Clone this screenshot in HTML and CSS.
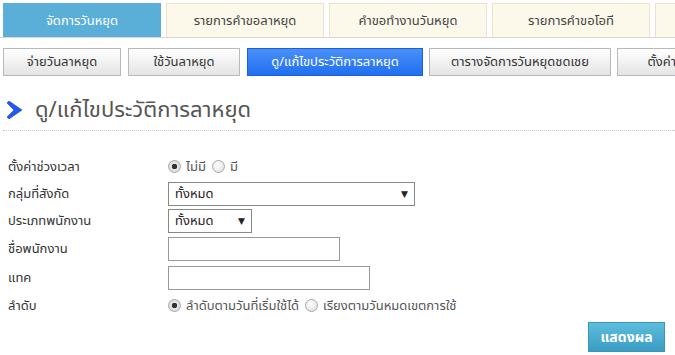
FILE: index.html
```html
<!DOCTYPE html>
<html lang="th">
<head>
    <meta charset="UTF-8">
    <meta name="viewport" content="width=device-width, initial-scale=1.0">
    <title>ดู/แก้ไขประวัติการลาหยุด</title>
    <link rel="stylesheet" href="styles.css">
</head>
<body>
    <div class="tabs">
        <div class="tab active">จัดการวันหยุด</div>
        <div class="tab">รายการคำขอลาหยุด</div>
        <div class="tab">คำขอทำงานวันหยุด</div>
        <div class="tab">รายการคำขอโอที</div>
        <div class="tab"></div>
    </div>

    <div class="subnav">
        <button class="btn">จ่ายวันลาหยุด</button>
        <button class="btn">ใช้วันลาหยุด</button>
        <button class="btn current">ดู/แก้ไขประวัติการลาหยุด</button>
        <button class="btn">ตารางจัดการวันหยุดชดเชย</button>
        <button class="btn">ตั้งค่าบริษัท</button>
    </div>

    <h2 class="page-title">
        <svg width="15" height="18" viewBox="0 0 15 18">
            <polygon points="0,2 2,0 15,9 2,18 0,16 7,9" fill="#2357ef" stroke="#1a3fd0" stroke-width="0.6"/>
        </svg>
        ดู/แก้ไขประวัติการลาหยุด
    </h2>

    <div class="form">
        <div class="row">
            <label>ตั้งค่าช่วงเวลา</label>
            <div class="field">
                <label class="radio"><input type="radio" name="period" checked> ไม่มี</label>
                <label class="radio"><input type="radio" name="period"> มี</label>
            </div>
        </div>
        <div class="row">
            <label>กลุ่มที่สังกัด</label>
            <div class="field">
                <div class="select wide">ทั้งหมด<span class="arrow">▼</span></div>
            </div>
        </div>
        <div class="row">
            <label>ประเภทพนักงาน</label>
            <div class="field">
                <div class="select narrow">ทั้งหมด<span class="arrow">▼</span></div>
            </div>
        </div>
        <div class="row tall">
            <label>ชื่อพนักงาน</label>
            <div class="field"><input type="text" class="text name"></div>
        </div>
        <div class="row tall">
            <label>แทค</label>
            <div class="field"><input type="text" class="text tag"></div>
        </div>
        <div class="row">
            <label>ลำดับ</label>
            <div class="field">
                <label class="radio"><input type="radio" name="order" checked> ลำดับตามวันที่เริ่มใช้ได้</label>
                <label class="radio"><input type="radio" name="order"> เรียงตามวันหมดเขตการใช้</label>
            </div>
        </div>
        <div class="actions">
            <button class="show">แสดงผล</button>
        </div>
    </div>
</body>
</html>
```

FILE: styles.css
```css
body {
    margin: 0;
    font-family: Tahoma, "Noto Sans Thai", "DejaVu Sans", "Noto Sans", sans-serif;
    font-size: 13px;
    color: #333;
    overflow: hidden;
    width: 675px;
    height: 355px;
}
.tabs {
    display: flex;
    gap: 5px;
    padding: 3px 0 0 3px;
    border-bottom: 1px solid #d6d6d6;
    height: 34px;
}
.tab {
    flex: 0 0 158px;
    box-sizing: border-box;
    height: 34px;
    background: #fdf9ea;
    border: 1px solid #ece3c8;
    border-bottom: none;
    color: #444;
    display: flex;
    align-items: center;
    justify-content: center;
}
.tab.active {
    background: #5aafd8;
    border-color: #5aafd8;
    color: #fff;
}
.subnav {
    display: flex;
    gap: 7px;
    padding: 10px 0 0 3px;
    white-space: nowrap;
    overflow: hidden;
}
.btn {
    flex-shrink: 0;
    height: 28px;
    padding: 0 14px;
    font-family: inherit;
    font-size: 13px;
    color: #333;
    border: 1px solid #b9b9b9;
    background: linear-gradient(#ffffff, #e4e4e4);
}
.btn:nth-child(1) { width: 118px; }
.btn:nth-child(2) { width: 112px; }
.btn:nth-child(3) { width: 176px; margin-right: -1px; }
.btn:nth-child(4) { width: 182px; margin-right: -1px; }
.btn:nth-child(5) { width: 120px; }
.btn.current {
    color: #fff;
    border-color: #1d5fd6;
    background: linear-gradient(#4a90f8, #1f6ff0);
}
.page-title {
    display: flex;
    align-items: center;
    gap: 13px;
    margin: 20px 0 0 3px;
    padding: 0 0 6px 4px;
    border-bottom: 1px dotted #c8c8c8;
    font-weight: normal;
    font-size: 22px;
    color: #555;
    height: 28px;
}
.form {
    padding: 22px 10px 0 8px;
}
.row {
    display: flex;
    align-items: center;
    height: 27px;
}
.row.tall {
    height: 29px;
}
.row > label {
    width: 160px;
    flex-shrink: 0;
}
.field {
    display: flex;
    align-items: center;
    gap: 6px;
}
.radio {
    display: flex;
    align-items: center;
    gap: 2px;
    color: #555;
}
.radio input {
    appearance: none;
    box-sizing: border-box;
    margin: 0 3px 0 0;
    width: 13px;
    height: 13px;
    border: 1px solid #a8a8a8;
    border-radius: 50%;
    background: radial-gradient(circle at 40% 35%, #ffffff, #dcdcdc);
}
.radio input:checked {
    background: radial-gradient(circle, #333 0 2.5px, #e6e6e6 3px, #d4d4d4);
}
.select {
    box-sizing: border-box;
    height: 24px;
    border: 1px solid #888;
    background: #fff;
    padding: 0 6px;
    display: flex;
    align-items: center;
    justify-content: space-between;
    color: #222;
}
.select.wide { width: 247px; }
.select.narrow { width: 84px; }
.arrow {
    font-size: 9px;
    color: #222;
}
.text {
    box-sizing: border-box;
    margin: 0;
    border: 1px solid #999;
    height: 24px;
}
.text.name { width: 172px; }
.text.tag { width: 202px; }
.actions {
    display: flex;
    justify-content: flex-end;
    margin-top: 3px;
}
.show {
    width: 77px;
    height: 30px;
    border: 1px solid #3a95b8;
    background: linear-gradient(#5cbddd, #3a9cc2);
    color: #fff;
    font-family: inherit;
    font-size: 14px;
    font-weight: bold;
}
```
